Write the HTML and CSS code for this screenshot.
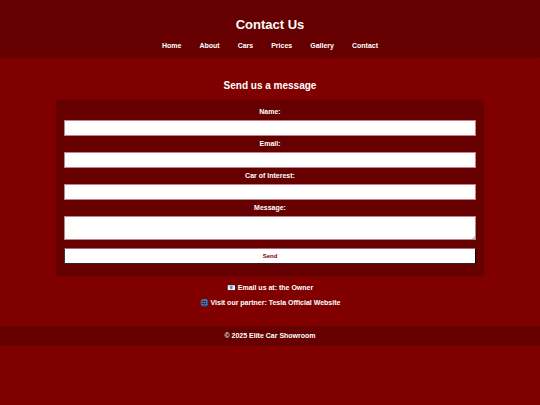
FILE: index.html
```html
<!DOCTYPE html>
<html lang="en">
<head>
<meta charset="utf-8">
<meta name="viewport" content="width=device-width, initial-scale=1">
<title>Contact Us</title>
<link rel="stylesheet" href="styles.css">
</head>
<body>
<header class="site-header">
  <h1>Contact Us</h1>
  <nav class="site-nav">
    <a href="#">Home</a>
    <a href="#">About</a>
    <a href="#">Cars</a>
    <a href="#">Prices</a>
    <a href="#">Gallery</a>
    <a href="#">Contact</a>
  </nav>
</header>
<main class="content">
  <h2>Send us a message</h2>
  <form class="contact-form">
    <label for="name">Name:</label>
    <input type="text" id="name" name="name">
    <label for="email">Email:</label>
    <input type="email" id="email" name="email">
    <label for="car">Car of Interest:</label>
    <input type="text" id="car" name="car">
    <label for="message">Message:</label>
    <textarea id="message" name="message"></textarea>
    <button type="submit">Send</button>
  </form>
  <p class="contact-line">📧 <a href="#">Email us at: the Owner</a></p>
  <p class="contact-line">🌐 <a href="#">Visit our partner: Tesla Official Website</a></p>
</main>
<footer class="site-footer">© 2025 Elite Car Showroom</footer>
</body>
</html>
```
FILE: styles.css
```css
* {
  box-sizing: border-box;
}

body {
  margin: 0;
  background: #800000;
  color: #fff;
  font: bold 7px/8px "Liberation Sans", Arial, sans-serif;
  text-align: center;
}

a {
  color: inherit;
  text-decoration: none;
}

h1,
h2,
p {
  margin: 0;
}

.site-header {
  padding: 17px 8px 8px;
  background: #660000;
  box-shadow: 0 0 2px rgba(0, 0, 0, 0.15);
}

h1 {
  font-size: 13px;
  line-height: 16px;
}

.site-nav {
  display: flex;
  justify-content: center;
  gap: 18px;
  padding-top: 9px;
}

.content {
  padding: 22px 56px 19px;
}

h2 {
  margin-bottom: 8px;
  font-size: 10px;
  line-height: 12px;
}

.contact-form {
  display: flex;
  flex-direction: column;
  margin-bottom: 8px;
  padding: 8px;
  border-radius: 3px;
  background: #660000;
  box-shadow: 0 0 3px rgba(0, 0, 0, 0.2);
}

.contact-form input,
.contact-form textarea,
.contact-form button {
  width: 100%;
  height: 16px;
  margin: 4px 0;
  padding: 3px;
  border: 1px solid #b88888;
  border-radius: 0;
  background: #fff;
  font: 6px/8px "Liberation Sans", Arial, sans-serif;
}

.contact-form label {
  line-height: 8px;
}

.contact-form textarea {
  height: 24px;
  resize: vertical;
}

.contact-form textarea::-webkit-resizer {
  background: linear-gradient(135deg, transparent 88%, #ccc 88%);
}

.contact-form button {
  padding: 0;
  border-color: #a07078 #000 #332026 #4d3038;
  color: #800000;
  font-weight: bold;
}

.contact-line {
  height: 8px;
}

.contact-line + .contact-line {
  margin-top: 7px;
}

.site-footer {
  padding: 6px 8px;
  background: #660000;
}
```
